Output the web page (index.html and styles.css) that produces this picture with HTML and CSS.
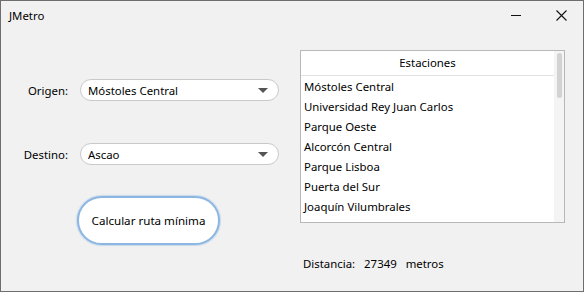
FILE: index.html
```html
<!DOCTYPE html>
<html lang="es">
<head>
    <meta charset="UTF-8">
    <title>JMetro</title>
    <link rel="stylesheet" href="styles.css">
</head>
<body>
    <!-- Window -->
    <div class="window">
        <div class="titlebar">
            <span class="title">JMetro</span>
            <div class="controls">
                <span class="ctrl minimize"></span>
                <svg class="ctrl close" width="11" height="11" viewBox="0 0 11 11">
                    <path d="M0.5 0.5 L10.5 10.5 M10.5 0.5 L0.5 10.5" stroke="#111" stroke-width="1.1" fill="none"/>
                </svg>
            </div>
        </div>

        <div class="content">
            <!-- Route form -->
            <div class="form-panel">
                <div class="field">
                    <label class="field-label">Origen:</label>
                    <div class="combo">
                        <span>Móstoles Central</span>
                        <span class="arrow"></span>
                    </div>
                </div>
                <div class="field">
                    <label class="field-label">Destino:</label>
                    <div class="combo">
                        <span>Ascao</span>
                        <span class="arrow"></span>
                    </div>
                </div>
                <button class="calc-button">Calcular ruta mínima</button>
            </div>

            <!-- Stations -->
            <div class="stations-panel">
                <div class="stations">
                    <div class="stations-list">
                        <div class="stations-header">Estaciones</div>
                        <div class="station">Móstoles Central</div>
                        <div class="station">Universidad Rey Juan Carlos</div>
                        <div class="station">Parque Oeste</div>
                        <div class="station">Alcorcón Central</div>
                        <div class="station">Parque Lisboa</div>
                        <div class="station">Puerta del Sur</div>
                        <div class="station">Joaquín Vilumbrales</div>
                    </div>
                    <div class="scrollbar"><div class="thumb"></div></div>
                </div>
                <div class="distance">
                    <span>Distancia:</span>
                    <span>27349</span>
                    <span>metros</span>
                </div>
            </div>
        </div>
    </div>
</body>
</html>
```

FILE: styles.css
```css
* {
    box-sizing: border-box;
    margin: 0;
    padding: 0;
}

body {
    background-color: #f1f1f1;
    font-family: 'Noto Sans', 'Open Sans', sans-serif;
    font-size: 11.4px;
    color: #000;
}

/* Window frame */
.window {
    width: 584px;
    height: 292px;
    border: 1px solid #6e6e6e;
    background-color: #f1f1f1;
    display: flex;
    flex-direction: column;
}

.titlebar {
    height: 30px;
    display: flex;
    align-items: center;
    justify-content: space-between;
    padding: 0 16px 0 8px;
}

.title {
    margin-top: -2px;
}

.controls {
    display: flex;
    align-items: center;
    gap: 35px;
    margin-top: -2px;
}

.minimize {
    display: block;
    width: 10px;
    height: 1px;
    background-color: #111;
}

.close {
    display: block;
}

.content {
    flex: 1;
    display: flex;
}

/* Left side */
.form-panel {
    width: 299px;
    padding-top: 48px;
    display: flex;
    flex-direction: column;
    align-items: flex-start;
}

.field {
    display: flex;
    align-items: center;
    height: 22px;
    margin-bottom: 42px;
}

.field-label {
    width: 67px;
    text-align: right;
    margin-right: 12px;
}

.combo {
    width: 199px;
    height: 22px;
    border: 1px solid #c9c9c9;
    border-radius: 11px;
    background-color: #fff;
    display: flex;
    align-items: center;
    justify-content: space-between;
    padding: 0 10px 0 7px;
}

.arrow {
    width: 0;
    height: 0;
    border-left: 5px solid transparent;
    border-right: 5px solid transparent;
    border-top: 5px solid #555;
}

.calc-button {
    margin-top: -11px;
    margin-left: 76px;
    width: 143px;
    height: 49px;
    border: 2px solid #8db7e3;
    border-radius: 25px;
    background-color: #fff;
    font-family: inherit;
    font-size: 11.6px;
    color: #000;
    box-shadow: 0 0 1px 1px rgba(141, 183, 227, 0.4);
}

/* Right side */
.stations-panel {
    padding-top: 19px;
    display: flex;
    flex-direction: column;
}

.stations {
    width: 265px;
    height: 173px;
    border: 1px solid #b8b8b8;
    background-color: #fff;
    display: flex;
}

.stations-list {
    flex: 1;
}

.stations-header {
    height: 25px;
    line-height: 24px;
    text-align: center;
    border-bottom: 1px solid #e2e2e2;
    margin-bottom: 1px;
}

.station {
    height: 20px;
    line-height: 20px;
    padding-left: 3px;
}

.scrollbar {
    width: 10px;
    background-color: #f4f4f4;
    padding: 2px 2px;
}

.thumb {
    width: 5px;
    height: 45px;
    border-radius: 3px;
    background-color: #d2d2d2;
    margin-left: 1px;
}

.distance {
    margin-top: 33px;
    padding-left: 3px;
    display: flex;
    gap: 9px;
}
```
